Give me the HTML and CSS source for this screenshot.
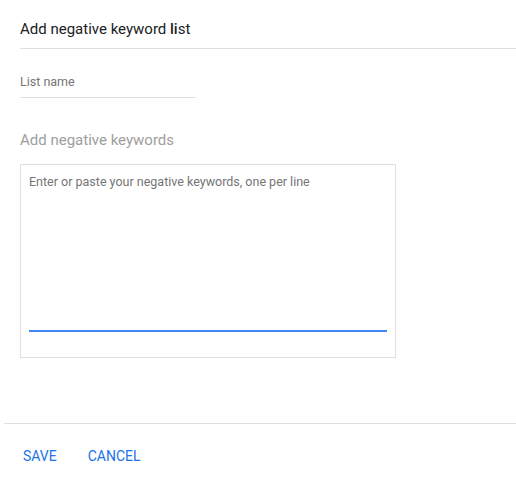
FILE: index.html
```html
<!DOCTYPE html>
<html>
<head>
<meta charset="utf-8">
<link rel="stylesheet" href="styles.css">
</head>
<body>
<div class="dialog">
  <div class="header"><span class="title">Add negative keyword <b>li</b>st</span></div>
  <div class="body">
    <div class="field">
      <div class="field-label">List name</div>
    </div>
    <div class="section-label">Add negative keywords</div>
    <div class="textbox">
      <div class="placeholder">Enter or paste your negative keywords, one per line</div>
      <div class="focus-line"></div>
    </div>
  </div>
  <div class="footer">
    <button class="btn">SAVE</button>
    <button class="btn">CANCEL</button>
  </div>
</div>
</body>
</html>
```

FILE: styles.css
```css
html, body {
  margin: 0;
  padding: 0;
  background: #fff;
}
body {
  font-family: Roboto, "Noto Sans", sans-serif;
  color: #202124;
  width: 516px;
  height: 479px;
  overflow: hidden;
}
.dialog {
  display: flex;
  flex-direction: column;
}
.header {
  margin-left: 20px;
  height: 48px;
  border-bottom: 1px solid #e0e0e0;
  display: flex;
  align-items: center;
}
.title {
  font-size: 15px;
  color: #202124;
  padding-top: 9px;
}
.title b {
  font-weight: 500;
}
.body {
  padding: 0 20px;
  height: 374px;
}
.field {
  width: 176px;
  border-bottom: 1px solid #e0e0e0;
  height: 48px;
  display: flex;
  align-items: flex-end;
}
.field-label {
  font-size: 12.5px;
  color: #757575;
  padding-bottom: 8px;
}
.section-label {
  font-size: 15px;
  color: #9e9e9e;
  margin-top: 32px;
  line-height: 20px;
}
.textbox {
  margin-top: 14px;
  width: 358px;
  height: 192px;
  border: 1px solid #e0e0e0;
  padding: 0 8px;
  position: relative;
}
.placeholder {
  font-size: 12.5px;
  color: #757575;
  margin-top: 9px;
  line-height: 16px;
}
.focus-line {
  position: absolute;
  left: 8px;
  right: 8px;
  top: 165px;
  height: 2px;
  background: #4285f4;
}
.footer {
  margin-left: 4px;
  border-top: 1px solid #e0e0e0;
  display: flex;
  padding: 16px 0 0 11px;
}
.btn {
  background: none;
  border: none;
  font-family: Roboto, sans-serif;
  font-size: 14px;
  font-weight: 400;
  color: #1a73e8;
  letter-spacing: 0;
  padding: 8px 8px;
  cursor: pointer;
}
.btn + .btn {
  margin-left: 15px;
}
```
